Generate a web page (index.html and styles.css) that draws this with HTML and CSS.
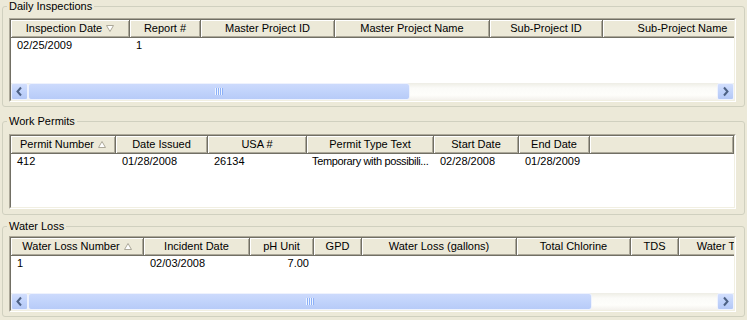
FILE: index.html
```html
<!DOCTYPE html>
<html>
<head>
<meta charset="utf-8">
<link rel="stylesheet" href="styles.css">
</head>
<body>
<fieldset class="group g1">
  <legend>Daily Inspections</legend>
  <div class="grid grid-1">
    <div class="grid-inner">
      <div class="hdr cols-1">
        <div class="hc">Inspection Date<svg class="sort" width="8" height="7" viewBox="0 0 8 7"><polygon points="0.5,0.5 7.5,0.5 4,6.5" fill="#fff" stroke="#ACA899"/></svg></div>
        <div class="hc">Report #</div>
        <div class="hc">Master Project ID</div>
        <div class="hc">Master Project Name</div>
        <div class="hc">Sub-Project ID</div>
        <div class="hc">Sub-Project Name</div>
      </div>
      <div class="body">
        <div class="row cols-1">
          <div class="cell">02/25/2009</div>
          <div class="cell">1</div>
          <div class="cell"></div>
          <div class="cell"></div>
          <div class="cell"></div>
          <div class="cell"></div>
        </div>
      </div>
      <div class="hscroll">
        <div class="sbtn"><svg width="15" height="15" viewBox="0 0 15 15"><polyline points="9,3.5 5.5,7.5 9,11.5" fill="none" stroke="#4D6185" stroke-width="2"/></svg></div>
        <div class="thumb thumb-1"><span class="grip"></span></div>
        <div class="track"></div>
        <div class="sbtn"><svg width="15" height="15" viewBox="0 0 15 15"><polyline points="6,3.5 9.5,7.5 6,11.5" fill="none" stroke="#4D6185" stroke-width="2"/></svg></div>
      </div>
    </div>
  </div>
</fieldset>

<fieldset class="group g2">
  <legend>Work Permits</legend>
  <div class="grid grid-2">
    <div class="grid-inner">
      <div class="hdr cols-2">
        <div class="hc">Permit Number<svg class="sort" width="8" height="7" viewBox="0 0 8 7"><polygon points="0.5,6.5 7.5,6.5 4,0.5" fill="#fff" stroke="#ACA899"/></svg></div>
        <div class="hc">Date Issued</div>
        <div class="hc">USA #</div>
        <div class="hc">Permit Type Text</div>
        <div class="hc">Start Date</div>
        <div class="hc">End Date</div>
        <div class="hc"></div>
      </div>
      <div class="body">
        <div class="row cols-2">
          <div class="cell">412</div>
          <div class="cell">01/28/2008</div>
          <div class="cell">26134</div>
          <div class="cell tight">Temporary with possibili...</div>
          <div class="cell">02/28/2008</div>
          <div class="cell">01/28/2009</div>
          <div class="cell"></div>
        </div>
      </div>
    </div>
  </div>
</fieldset>

<fieldset class="group g3">
  <legend>Water Loss</legend>
  <div class="grid grid-3">
    <div class="grid-inner">
      <div class="hdr cols-3">
        <div class="hc">Water Loss Number<svg class="sort" width="8" height="7" viewBox="0 0 8 7"><polygon points="0.5,6.5 7.5,6.5 4,0.5" fill="#fff" stroke="#ACA899"/></svg></div>
        <div class="hc">Incident Date</div>
        <div class="hc">pH Unit</div>
        <div class="hc">GPD</div>
        <div class="hc">Water Loss (gallons)</div>
        <div class="hc">Total Chlorine</div>
        <div class="hc">TDS</div>
        <div class="hc">Water Temperature</div>
      </div>
      <div class="body">
        <div class="row cols-3">
          <div class="cell">1</div>
          <div class="cell">02/03/2008</div>
          <div class="cell num">7.00</div>
          <div class="cell"></div>
          <div class="cell"></div>
          <div class="cell"></div>
          <div class="cell"></div>
          <div class="cell"></div>
        </div>
      </div>
      <div class="hscroll">
        <div class="sbtn"><svg width="15" height="15" viewBox="0 0 15 15"><polyline points="9,3.5 5.5,7.5 9,11.5" fill="none" stroke="#4D6185" stroke-width="2"/></svg></div>
        <div class="thumb thumb-3"><span class="grip"></span></div>
        <div class="track"></div>
        <div class="sbtn"><svg width="15" height="15" viewBox="0 0 15 15"><polyline points="6,3.5 9.5,7.5 6,11.5" fill="none" stroke="#4D6185" stroke-width="2"/></svg></div>
      </div>
    </div>
  </div>
</fieldset>
</body>
</html>
```
FILE: styles.css
```css
* { box-sizing: border-box; }
html, body { margin: 0; padding: 0; }
body {
  background: #ECE9D8;
  font-family: "Liberation Sans", Arial, sans-serif;
  font-size: 11px;
  line-height: 13px;
  color: #000;
  width: 747px;
  height: 320px;
  overflow: hidden;
}

.group {
  margin: 0 2px;
  padding: 5px 8px 4px 6px;
  border: 1px solid #D0D0BF;
  border-radius: 3px;
  min-width: 0;
}
.group legend {
  padding: 0 2px;
  margin-left: -2px;
  height: 13px;
  line-height: 13px;
}
.g1 { margin-top: 0; }
.g2 { margin-top: 8px; padding-top: 6px; padding-bottom: 5px; }
.g3 { margin-top: 5px; padding-top: 3px; padding-bottom: 4px; }

.grid {
  border: 1px solid;
  border-color: #ACA899 #fff #fff #ACA899;
  background: #fff;
}
.grid-1 { height: 84px; }
.grid-2 { height: 75px; }
.grid-3 { height: 76px; }

.grid-inner {
  height: 100%;
  border: 1px solid;
  border-color: #716F64 #F1EFE2 #F1EFE2 #716F64;
  display: flex;
  flex-direction: column;
  overflow: hidden;
}

.cols-1 { grid-template-columns: 119px 71px 134px 155px 113px 160px; }
.cols-2 { grid-template-columns: 105px 92px 99px 127px 85px 71px 1fr; }
.cols-3 { grid-template-columns: 133px 106px 64px 48px 155px 114px 48px 130px; }

.hdr {
  display: grid;
  flex: none;
  height: 18px;
  background: #ECE9D8;
  overflow: hidden;
}
.hc {
  display: flex;
  align-items: center;
  justify-content: center;
  gap: 4px;
  white-space: nowrap;
  overflow: hidden;
  border-right: 1px solid #716F64;
  border-bottom: 1px solid #716F64;
  box-shadow: inset 1px 1px #fff, inset -1px -1px #ACA899;
}
.sort { flex: none; }

.body {
  flex: 1;
  min-height: 0;
  overflow: hidden;
  background: #fff;
}
.row {
  display: grid;
  height: 15px;
  line-height: 15px;
}
.cell {
  padding-left: 6px;
  white-space: nowrap;
  overflow: hidden;
}
.cell.tight {
  letter-spacing: -0.35px;
  padding-left: 5px;
}
.cell.num {
  text-align: right;
  padding-right: 5px;
}

.hscroll {
  flex: none;
  height: 17px;
  display: flex;
  background: linear-gradient(#EEEDE5, #FBFBF8 30%, #FEFEFB 70%, #F3F1EC);
}
.sbtn {
  flex: none;
  width: 17px;
  height: 17px;
  border: 1px solid #EEF2FD;
  border-radius: 2px;
  background: linear-gradient(#D2DEFD, #C1D3FB 50%, #B4C8F6);
  display: flex;
  align-items: center;
  justify-content: center;
}
.thumb {
  flex: none;
  height: 17px;
  border: 1px solid #EEF2FD;
  border-radius: 3px;
  background: linear-gradient(#CCDAFC, #C1D3FB 50%, #B7CBF8);
  display: flex;
  align-items: center;
  justify-content: center;
}
.thumb-1 { width: 382px; }
.thumb-3 { width: 564px; }
.track { flex: 1; }
.grip {
  width: 8px;
  height: 7px;
  background: repeating-linear-gradient(to right, #EEF4FE 0 1px, #8CB0F8 1px 2px);
}
```
